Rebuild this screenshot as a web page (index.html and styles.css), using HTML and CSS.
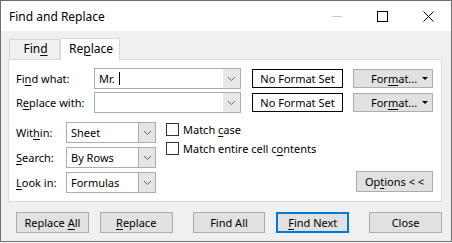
FILE: index.html
```html
<!DOCTYPE html>
<html lang="en">
<head>
    <meta charset="UTF-8">
    <title>Find and Replace</title>
    <link rel="stylesheet" href="styles.css">
</head>
<body>
    <div class="window">
        <div class="titlebar">
            <span class="title">Find and Replace</span>
            <div class="controls">
                <span class="ctl ctl-min"></span>
                <span class="ctl ctl-max"></span>
                <svg class="ctl ctl-close" width="11" height="11" viewBox="0 0 11 11">
                    <path d="M0.5 0.5 L10.5 10.5 M10.5 0.5 L0.5 10.5" stroke="#000" stroke-width="1" fill="none"/>
                </svg>
            </div>
        </div>

        <div class="body">
            <div class="tabs">
                <div class="tab">Fin<u>d</u></div>
                <div class="tab active">Re<u>p</u>lace</div>
            </div>

            <div class="panel">
                <!-- what / with rows -->
                <div class="row">
                    <label class="lbl lbl-wide">Fi<u>n</u>d what:</label>
                    <div class="combo combo-wide">
                        <span class="combo-text"><span>Mr.</span><span class="caret"></span></span>
                        <span class="combo-arrow flat"><svg width="7" height="4" viewBox="0 0 7 4"><path d="M0 0 L3.5 3.5 L7 0" stroke="#606060" fill="none"/></svg></span>
                    </div>
                    <div class="fmt-preview">No Format Set</div>
                    <button class="btn btn-fmt"><span>For<u>m</u>at...</span><span class="tri"></span></button>
                </div>
                <div class="row">
                    <label class="lbl lbl-wide">R<u>e</u>place with:</label>
                    <div class="combo combo-wide">
                        <span class="combo-text"></span>
                        <span class="combo-arrow flat"><svg width="7" height="4" viewBox="0 0 7 4"><path d="M0 0 L3.5 3.5 L7 0" stroke="#606060" fill="none"/></svg></span>
                    </div>
                    <div class="fmt-preview">No Format Set</div>
                    <button class="btn btn-fmt"><span>For<u>m</u>at...</span><span class="tri"></span></button>
                </div>

                <div class="options">
                    <div class="opt-grid">
                        <label class="lbl">Wit<u>h</u>in:</label>
                        <div class="combo combo-small">
                            <span class="combo-text">Sheet</span>
                            <span class="combo-arrow"><svg width="7" height="4" viewBox="0 0 7 4"><path d="M0 0 L3.5 3.5 L7 0" stroke="#606060" fill="none"/></svg></span>
                        </div>
                        <label class="lbl"><u>S</u>earch:</label>
                        <div class="combo combo-small">
                            <span class="combo-text">By Rows</span>
                            <span class="combo-arrow"><svg width="7" height="4" viewBox="0 0 7 4"><path d="M0 0 L3.5 3.5 L7 0" stroke="#606060" fill="none"/></svg></span>
                        </div>
                        <label class="lbl"><u>L</u>ook in:</label>
                        <div class="combo combo-small">
                            <span class="combo-text">Formulas</span>
                            <span class="combo-arrow"><svg width="7" height="4" viewBox="0 0 7 4"><path d="M0 0 L3.5 3.5 L7 0" stroke="#606060" fill="none"/></svg></span>
                        </div>
                    </div>
                    <div class="checks">
                        <label class="check"><span class="box"></span><span>Match <u>c</u>ase</span></label>
                        <label class="check"><span class="box"></span><span>Match entire cell c<u>o</u>ntents</span></label>
                    </div>
                    <button class="btn btn-options">Op<u>t</u>ions &lt; &lt;</button>
                </div>
            </div>

            <div class="actions">
                <button class="btn btn-act">Replace <u>A</u>ll</button>
                <button class="btn btn-act"><u>R</u>eplace</button>
                <button class="btn btn-act gap-big">Find All</button>
                <button class="btn btn-act default"><u>F</u>ind Next</button>
                <button class="btn btn-act gap-big">Close</button>
            </div>
        </div>
    </div>
</body>
</html>
```

FILE: styles.css
```css
* {
    box-sizing: border-box;
}

body {
    margin: 0;
    background: #fff;
    font-family: "Noto Sans", "Open Sans", sans-serif;
    font-size: 11px;
    color: #000;
}

u {
    text-decoration-thickness: 1px;
    text-underline-offset: 2px;
}

.window {
    width: 452px;
    height: 242px;
    border: 1px solid #6f6f6f;
    background: #f0f0f0;
    display: flex;
    flex-direction: column;
}

/* Title bar */
.titlebar {
    height: 30px;
    background: #fff;
    display: flex;
    align-items: center;
    justify-content: space-between;
    padding-left: 8px;
    font-size: 12px;
}

.controls {
    display: flex;
    align-items: center;
}

.ctl {
    display: block;
}

.ctl-min {
    width: 10px;
    height: 1px;
    background: #c8c8c8;
    margin-right: 35px;
}

.ctl-max {
    width: 11px;
    height: 11px;
    border: 1px solid #000;
    margin-right: 35px;
}

.ctl-close {
    margin-right: 17px;
}

/* Tabs + panel */
.body {
    flex: 1;
    padding: 0 9px 0 7px;
}

.tabs {
    height: 28px;
    display: flex;
    align-items: flex-end;
    padding-left: 1px;
    font-size: 12px;
}

.tab {
    height: 20px;
    width: 51px;
    border: 1px solid #d9d9d9;
    border-bottom: none;
    text-align: center;
    line-height: 18px;
    padding-left: 2px;
}

.tab.active {
    height: 22px;
    width: 60px;
    margin-bottom: -1px;
    background: #fff;
    position: relative;
    z-index: 1;
    line-height: 19px;
}

.panel {
    background: #fff;
    border: 1px solid #d9d9d9;
    height: 143px;
    padding: 8px 7px;
}

.row {
    display: flex;
    align-items: center;
    height: 21px;
    margin-bottom: 3px;
}

.lbl {
    display: block;
    white-space: nowrap;
}

.lbl-wide {
    width: 78px;
}

.combo {
    height: 21px;
    border: 1px solid #adadad;
    background: #fff;
    display: flex;
    align-items: stretch;
}

.combo-wide {
    width: 147px;
}

.combo-small {
    width: 90px;
}

.combo-text {
    flex: 1;
    padding-left: 4px;
    line-height: 19px;
    display: flex;
    align-items: center;
}

.caret {
    display: inline-block;
    width: 1px;
    height: 13px;
    background: #000;
    margin-left: 4px;
}

.combo-arrow {
    width: 17px;
    background: #e5e5e5;
    border-left: 1px solid #adadad;
    display: flex;
    align-items: center;
    justify-content: center;
}

.combo-arrow.flat {
    border-left: none;
    background: #e8e8e8;
}

.fmt-preview {
    width: 91px;
    height: 19px;
    margin-left: 11px;
    border: 1px solid #000;
    background: #fff;
    text-align: center;
    line-height: 17px;
}

.btn {
    font-family: inherit;
    font-size: 11px;
    color: #000;
    background: #e1e1e1;
    border: 1px solid #adadad;
    padding: 0;
    height: 21px;
}

.btn-fmt {
    width: 80px;
    height: 19px;
    margin-left: 10px;
    padding-left: 17px;
    display: flex;
    align-items: center;
}

.tri {
    display: inline-block;
    width: 0;
    height: 0;
    border-left: 3px solid transparent;
    border-right: 3px solid transparent;
    border-top: 3px solid #000;
    margin-left: auto;
    margin-right: 4px;
}

/* Within / Search / Look in */
.options {
    display: flex;
    align-items: flex-start;
    margin-top: 9px;
}

.opt-grid {
    display: grid;
    grid-template-columns: 50px 90px;
    grid-auto-rows: 21px;
    row-gap: 4px;
    align-items: center;
}

.checks {
    display: flex;
    flex-direction: column;
    gap: 6px;
    margin-left: 10px;
    padding-top: 1px;
}

.check {
    display: flex;
    align-items: center;
    height: 13px;
    white-space: nowrap;
}

.box {
    width: 13px;
    height: 13px;
    border: 1px solid #333;
    background: #fff;
    margin-right: 4px;
}

.btn-options {
    width: 77px;
    margin-left: auto;
    margin-right: 1px;
    margin-top: 49px;
}

/* Bottom buttons */
.actions {
    display: flex;
    padding-left: 8px;
    margin-top: 10px;
    gap: 11px;
}

.btn-act {
    width: 73px;
}

.gap-big {
    margin-left: 9px;
}

.btn-act.default {
    border: 2px solid #0078d7;
}
```
